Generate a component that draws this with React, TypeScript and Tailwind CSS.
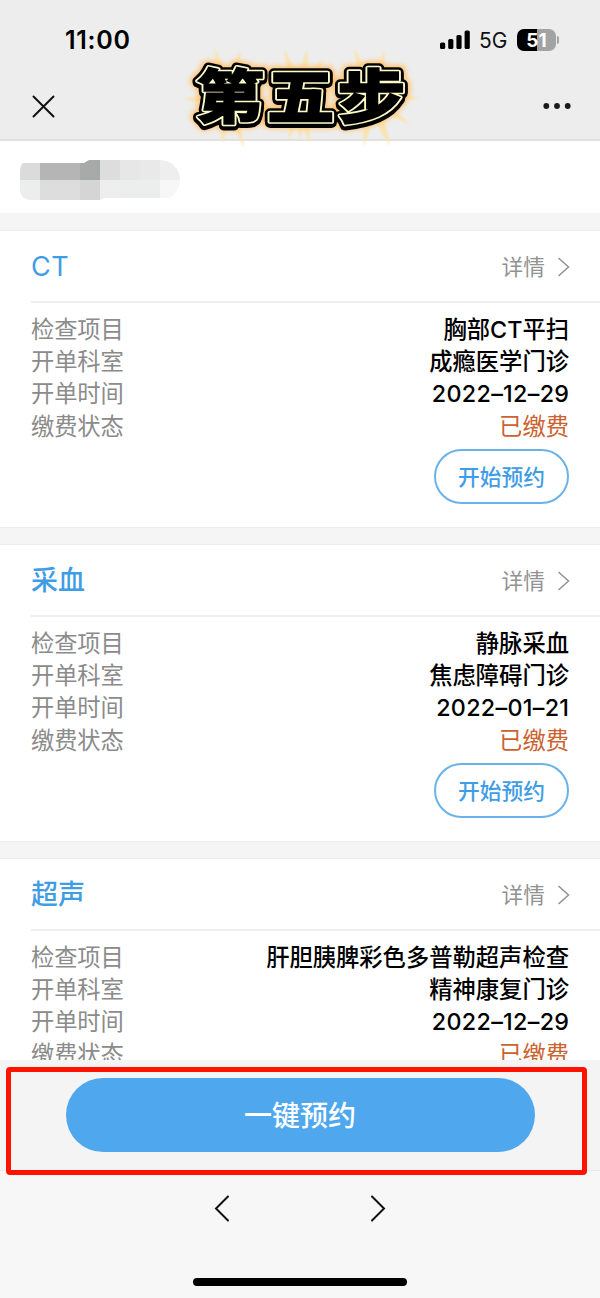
import React from 'react';
import clsx from 'clsx';

type Exam = {
  title: string;
  item: string;
  department: string;
  date: string;
  status: string;
};

type RowProps = {
  label: string;
  value: string;
  paid?: boolean;
  wide?: boolean;
};

const exams: Exam[] = [
  {
    title: 'CT', item: '胸部CT平扫', department: '成瘾医学门诊', date: '2022–12–29', status: '已缴费',
  },
  {
    title: '采血', item: '静脉采血', department: '焦虑障碍门诊', date: '2022–01–21', status: '已缴费',
  },
  {
    title: '超声', item: '肝胆胰脾彩色多普勒超声检查', department: '精神康复门诊', date: '2022–12–29', status: '已缴费',
  },
];

const topTiles = ['bg-[#dbdbdb]', 'bg-[#b5b5b5]', 'bg-[#b5b5b5]', 'bg-[#a8aaa9]', 'bg-[#dddddd]', 'bg-[#e7e7e7]', 'bg-[#e9e9e9]', 'bg-[#eeeeee]'];
const bottomTiles = ['bg-[#eceeed]', 'bg-[#dddddd]', 'bg-[#dddddd]', 'bg-[#d5d5d5]', 'bg-[#eeeeee]', 'bg-[#eceeed]', 'bg-[#eceeed]', 'bg-[#f7f7f7]'];

// spikes of the glow: centre x, centre y, angle, length
const rays = [
  [50, 55, -105, 52], [50, 55, -75, 50], [50, 55, -130, 42], [50, 55, 178, 45], [50, 55, 97, 46], [50, 55, 72, 52], [50, 55, 125, 42],
  [122, 55, -108, 52], [122, 55, -82, 50], [122, 55, -60, 46], [122, 55, 105, 44], [122, 55, 78, 46], [122, 55, 90, 42],
  [194, 55, -110, 54], [194, 55, -75, 50], [194, 55, -45, 50], [194, 55, 0, 48], [194, 55, 35, 46], [194, 55, 70, 52], [194, 55, 100, 49],
];

function StepBadge() {
  return (
    <svg className="absolute top-[43px] left-[178px]" width="244" height="112" viewBox="0 0 244 112">
      <defs>
        <filter id="glow" x="-20%" y="-40%" width="140%" height="180%"><feGaussianBlur stdDeviation="2.5" /></filter>
        <filter id="soft" x="-20%" y="-40%" width="140%" height="180%"><feGaussianBlur stdDeviation="0.8" /></filter>
        <g id="step">
          <text transform="translate(18 74.5) scale(1.16 1)" fontFamily="'Noto Sans CJK SC', sans-serif" fontWeight="900" fontSize="58.5" letterSpacing="2.5">第五步</text>
        </g>
      </defs>
      <g fill="#ffdf9a" opacity="0.75" filter="url(#soft)">
        {rays.map(([x, y, angle, length]) => (
          <path key={`${x}${angle}`} d={`M0 -9L${length} 0L0 9Z`} transform={`translate(${x} ${y}) rotate(${angle})`} />
        ))}
      </g>
      <use href="#step" stroke="#ffc473" strokeWidth="14" strokeLinejoin="round" filter="url(#glow)" />
      <use href="#step" y="2" stroke="#000" strokeWidth="9" strokeLinejoin="round" />
      <use href="#step" stroke="#000" strokeWidth="9.5" strokeLinejoin="round" />
      <use href="#step" stroke="#fbfac8" strokeWidth="4.6" strokeLinejoin="round" />
      <use href="#step" stroke="#000" strokeWidth="1.4" />
    </svg>
  );
}

function Chevron() {
  return (
    <svg className="ml-3" width="13" height="20" viewBox="0 0 13 20" fill="none" stroke="#929292" strokeWidth="1.5">
      <path d="M1.5 1L11.5 10L1.5 19" />
    </svg>
  );
}

function StatusBar() {
  return (
    <div className="flex h-20 items-center justify-between pr-[41px] pl-[65px]">
      <span className="pt-0.5 text-[25px] font-semibold tracking-[0.7px] text-black">11:00</span>
      <div className="flex items-center">
        <svg width="30" height="20" viewBox="0 0 30 20" fill="#000">
          <rect x="0" y="12.5" width="5.2" height="6.5" rx="1.6" />
          <rect x="8.2" y="9" width="5.2" height="10" rx="1.6" />
          <rect x="16.4" y="5" width="5.2" height="14" rx="1.6" />
          <rect x="24.6" y="0.5" width="5.2" height="18.5" rx="1.6" />
        </svg>
        <span className="ml-[9px] w-[38px] pt-0.5 text-[21px] text-[#111]">5G</span>
        <div className="flex h-[22px] w-[39px] items-center justify-center rounded-[7px] bg-[linear-gradient(90deg,#000_51%,#a1a4a3_51%)] text-[19px] leading-none font-bold text-white">
          51
        </div>
        <span className="ml-px h-2 w-[2px] rounded-r-full bg-[#a1a4a3]" />
      </div>
    </div>
  );
}

function Row({
  label, value, paid, wide,
}: RowProps) {
  return (
    <div className="flex h-[32.3px] items-center justify-between text-[23.3px]">
      <span className="tracking-[-0.15px] text-[#8b8b8b]">{label}</span>
      <span className={clsx(paid ? 'text-[#cc6230]' : 'font-medium text-black', wide && '-mr-[0.3px] tracking-[0.3px]')}>{value}</span>
    </div>
  );
}

function ExamCard({ exam }: { exam: Exam }) {
  return (
    <section className="mb-4 h-[298px] shrink-0 border-y border-[#ededed] bg-white pl-[31px]">
      <div className="flex h-[72px] items-center justify-between border-b-2 border-[#eeeeee] pt-px pr-[30px]">
        <h2 className="pt-px text-[27px] font-medium text-[#3f9de6]">
          {exam.title === 'CT' ? <span className="font-normal tracking-[0.5px]">{exam.title}</span> : exam.title}
        </h2>
        <div className="flex items-center pt-px text-[21.7px] text-[#929292]">
          详情
          <Chevron />
        </div>
      </div>
      <div className="pt-[11px] pr-[31px]">
        <Row label="检查项目" value={exam.item} />
        <Row label="开单科室" value={exam.department} />
        <Row label="开单时间" value={exam.date} wide />
        <Row label="缴费状态" value={exam.status} paid />
        <button type="button" className="mt-[5.5px] ml-auto flex h-[55px] w-[135px] items-center justify-center rounded-full border-2 border-[#459fe2]/80 pt-[3px] text-[21.7px] font-medium text-[#3f9de6]">
          开始预约
        </button>
      </div>
    </section>
  );
}

function App() {
  return (
    <div className="relative flex h-[1298px] w-[600px] flex-col overflow-hidden bg-[#f5f5f5] font-[Inter,'Noto_Sans_CJK_SC',sans-serif]">
      <header className="h-[141px] shrink-0 border-b-2 border-[#e1e1e1] bg-[#ededed]">
        <StatusBar />
        <div className="flex h-[52px] items-center justify-between pr-[29px] pl-8">
          <svg width="23" height="23" viewBox="0 0 23 23" fill="none" stroke="#111" strokeWidth="2" strokeLinecap="round">
            <path d="M1.5 1.5L21.5 21.5M21.5 1.5L1.5 21.5" />
          </svg>
          <svg width="28" height="8" viewBox="0 0 28 8" fill="#1a1a1a">
            <circle cx="3.3" cy="4" r="2.9" />
            <circle cx="14" cy="4" r="2.9" />
            <circle cx="24.7" cy="4" r="2.9" />
          </svg>
        </div>
      </header>
      <StepBadge />

      <main className="flex h-[919px] shrink-0 flex-col overflow-hidden">
        <div className="mb-[17px] h-[72px] shrink-0 bg-white pt-[19px] pl-5">
          <div className="grid h-10 w-40 grid-cols-8 overflow-hidden rounded-l-[10px] rounded-r-[20px] [clip-path:polygon(0_3px,64px_3px,69px_0,100%_0,100%_38px,84px_38px,80px_100%,0_100%)]">
            {/* eslint-disable-next-line react/no-array-index-key */}
            {[...topTiles, ...bottomTiles].map((tile, index) => <span key={index} className={tile} />)}
          </div>
        </div>
        {exams.map((exam) => <ExamCard key={exam.title} exam={exam} />)}
      </main>

      <div className="relative z-10 h-[111px] shrink-0 border-b border-[#e9e9e9] bg-[#f4f4f4] pt-[7px] pl-[6px]">
        <div className="flex h-[108px] w-[581px] justify-center rounded-[4px] border-[5px] border-[#ff1200] pt-[6px]">
          <button type="button" className="ml-[7px] flex h-[74px] w-[469px] items-center justify-center rounded-full bg-[#4fa8ed] pt-0.5 text-[28px] font-medium text-white">
            一键预约
          </button>
        </div>
      </div>

      <footer className="flex grow flex-col items-center justify-between bg-[#f7f7f7] pb-3">
        <div className="flex w-[172px] justify-between pt-[24px]">
          <svg width="16" height="27" viewBox="0 0 16 27" fill="none" stroke="#111" strokeWidth="2" strokeLinecap="round">
            <path d="M14 1.5L2 13.5L14 25.5" />
          </svg>
          <svg width="16" height="27" viewBox="0 0 16 27" fill="none" stroke="#111" strokeWidth="2" strokeLinecap="round">
            <path d="M2 1.5L14 13.5L2 25.5" />
          </svg>
        </div>
        <div className="h-2 w-[214px] rounded-full bg-black" />
      </footer>
    </div>
  );
}

export default App;
